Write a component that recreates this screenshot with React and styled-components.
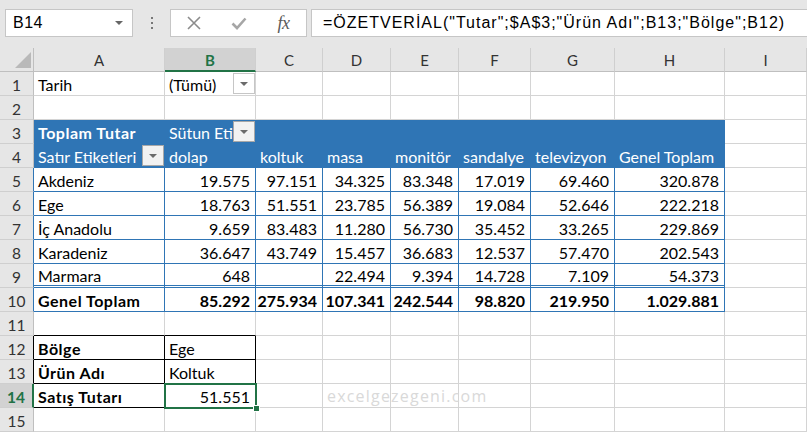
import React from 'react';
import styled, { createGlobalStyle } from 'styled-components';

const BLUE = '#2f75b5';
const GRID = '#d4d4d4';
const GREEN = '#217346';
const COLS = [34, 131, 91, 67, 68, 68, 72, 84, 110, 82];
const LETTERS = ['A', 'B', 'C', 'D', 'E', 'F', 'G', 'H', 'I'];

const GlobalStyle = createGlobalStyle`
  html, body { margin: 0; padding: 0; background: #fff; }
  body { font-family: Lato, "Liberation Sans", sans-serif; }
`;

const Page = styled.div`
  position: relative;
  width: 807px;
  height: 432px;
  overflow: hidden;
  background: #fff;
`;

const TopBar = styled.div`
  box-sizing: border-box;
  height: 48px;
  background: #e6e6e6;
  display: flex;
  align-items: flex-start;
  padding: 9px 0 0 5px;
`;

const NameBox = styled.div`
  box-sizing: border-box;
  width: 128px;
  height: 28px;
  background: #fff;
  border: 1px solid #c6c6c6;
  display: flex;
  align-items: center;
  justify-content: space-between;
  padding: 0 9px 0 7px;
  font-family: "Liberation Sans", Arial, sans-serif;
  font-size: 16px;
  letter-spacing: 0.5px;
  color: #000;
`;

const Caret = styled.span`
  width: 0;
  height: 0;
  border-left: 4px solid transparent;
  border-right: 4px solid transparent;
  border-top: 4px solid #666;
`;

const Dots = styled.div`
  width: 37px;
  height: 28px;
  display: flex;
  flex-direction: column;
  align-items: center;
  justify-content: center;
  gap: 3px;
  & > span {
    width: 2px;
    height: 2px;
    background: #777;
  }
`;

const FxBox = styled.div`
  box-sizing: border-box;
  width: 137px;
  height: 28px;
  background: #fff;
  border: 1px solid #c6c6c6;
  display: grid;
  grid-template-columns: 45px 45px 45px;
  align-items: center;
  justify-items: center;
`;

const FxText = styled.span`
  font-family: "Liberation Serif", "DejaVu Serif", serif;
  font-style: italic;
  font-size: 18px;
  color: #5a5a5a;
  letter-spacing: -0.5px;
`;

const Formula = styled.div`
  box-sizing: border-box;
  flex: 1;
  margin-left: 4px;
  margin-right: -2px;
  height: 28px;
  background: #fff;
  border: 1px solid #c6c6c6;
  display: flex;
  align-items: center;
  padding-left: 11px;
  font-family: "Liberation Sans", Arial, sans-serif;
  font-size: 16px;
  letter-spacing: 1px;
  color: #000;
  white-space: nowrap;
`;

const Sheet = styled.div`
  display: grid;
  grid-template-columns: ${COLS.map((w) => w + 'px').join(' ')};
  grid-auto-rows: 24px;
`;

const Corner = styled.div`
  box-sizing: border-box;
  background: #e6e6e6;
  border-right: 1px solid #bfbfbf;
  border-bottom: 1px solid #bfbfbf;
  display: flex;
  align-items: flex-end;
  justify-content: flex-end;
  padding: 0 2px 3px 0;
`;

const ColHead = styled.div`
  box-sizing: border-box;
  display: flex;
  align-items: center;
  justify-content: center;
  background: ${(p) => (p.$active ? '#d2d2d2' : '#e6e6e6')};
  color: ${(p) => (p.$active ? GREEN : '#333')};
  font-weight: ${(p) => (p.$active ? 700 : 400)};
  border-right: 1px solid #cfcfcf;
  border-bottom: ${(p) => (p.$active ? `2px solid ${GREEN}` : '1px solid #bfbfbf')};
  font-size: 15px;
  padding-top: 1px;
`;

const RowHead = styled.div`
  box-sizing: border-box;
  display: flex;
  align-items: center;
  justify-content: center;
  background: ${(p) => (p.$active ? '#d2d2d2' : '#e6e6e6')};
  color: ${(p) => (p.$active ? GREEN : '#333')};
  font-weight: ${(p) => (p.$active ? 700 : 400)};
  border-bottom: 1px solid #cfcfcf;
  border-right: ${(p) => (p.$active ? `2px solid ${GREEN}` : `1px solid ${p.$r || '#bfbfbf'}`)};
  font-size: 15.5px;
  padding-top: 2px;
`;

const Cell = styled.div`
  box-sizing: border-box;
  position: relative;
  z-index: ${(p) => (p.$sel ? 2 : 0)};
  display: flex;
  align-items: center;
  justify-content: ${(p) => (p.$align === 'right' ? 'flex-end' : 'flex-start')};
  padding: 2px ${(p) => (p.$btn ? '0' : '5px')} 0 4px;
  background: ${(p) => p.$bg || '#fff'};
  color: ${(p) => p.$color || '#000'};
  font-weight: ${(p) => (p.$bold ? 700 : 400)};
  letter-spacing: ${(p) => (p.$wide ? '0.5px' : 'normal')};
  border-right: 1px solid ${(p) => p.$r || GRID};
  border-bottom: ${(p) => p.$b || `1px solid ${GRID}`};
  font-size: 16px;
  white-space: nowrap;
  &::after {
    content: ${(p) => (p.$sel ? "''" : 'none')};
    position: absolute;
    left: -1px;
    top: -1px;
    right: -2px;
    bottom: -2px;
    border: 2px solid ${GREEN};
  }
  &::before {
    content: ${(p) => (p.$sel ? "''" : 'none')};
    position: absolute;
    right: -5px;
    bottom: -5px;
    width: 5px;
    height: 5px;
    background: ${GREEN};
    border: 1px solid #fff;
    z-index: 3;
  }
`;

const Txt = styled.span`
  overflow: hidden;
  flex: ${(p) => (p.$clip ? 1 : 'none')};
  min-width: 0;
`;

const DropBtn = styled.span`
  flex: none;
  align-self: flex-end;
  box-sizing: border-box;
  width: 22px;
  height: 21px;
  margin-bottom: 1px;
  background: ${(p) => (p.$plain ? '#fff' : '#f2f2f2')};
  border: 1px solid ${(p) => (p.$plain ? '#c6c6c6' : '#a8a8a8')};
  display: flex;
  align-items: center;
  justify-content: center;
  &::after {
    content: '';
    border-left: 4px solid transparent;
    border-right: 4px solid transparent;
    border-top: 4px solid #6b6b6b;
  }
`;

const Watermark = styled.div`
  position: absolute;
  left: 327px;
  top: 385px;
  font-family: "Open Sans", "DejaVu Sans", sans-serif;
  font-size: 16px;
  letter-spacing: 1.2px;
  color: #d9d9d9;
  pointer-events: none;
`;

const headers = ['dolap', 'koltuk', 'masa', 'monitör', 'sandalye', 'televizyon', 'Genel Toplam'];
const regions = [
  ['Akdeniz', ['19.575', '97.151', '34.325', '83.348', '17.019', '69.460', '320.878']],
  ['Ege', ['18.763', '51.551', '23.785', '56.389', '19.084', '52.646', '222.218']],
  ['İç Anadolu', ['9.659', '83.483', '11.280', '56.730', '35.452', '33.265', '229.869']],
  ['Karadeniz', ['36.647', '43.749', '15.457', '36.683', '12.537', '57.470', '202.543']],
  ['Marmara', ['648', '', '22.494', '9.394', '14.728', '7.109', '54.373']],
];
const totals = ['85.292', '275.934', '107.341', '242.544', '98.820', '219.950', '1.029.881'];

const Empty = ({ n, ...rest }) =>
  Array.from({ length: n }).map((_, i) => <Cell key={'e' + i} {...rest} />);

export default function App() {
  const blueFill = { $bg: BLUE, $color: '#fff', $r: BLUE, $b: `1px solid ${BLUE}` };
  const pv = { $r: BLUE, $b: `1px solid ${BLUE}` };
  const black = '#000';
  const boxed = { $r: black, $b: `1px solid ${black}` };

  return (
    <Page>
      <GlobalStyle />
      <TopBar>
        <NameBox>
          <span>B14</span>
          <Caret />
        </NameBox>
        <Dots>
          <span />
          <span />
          <span />
        </Dots>
        <FxBox>
          <svg width="14" height="14" viewBox="0 0 14 14">
            <path d="M1 1 L13 13 M13 1 L1 13" stroke="#8c8c8c" strokeWidth="1.6" fill="none" />
          </svg>
          <svg width="16" height="13" viewBox="0 0 16 13">
            <path d="M1.5 6.5 L6 11 L14.5 1.5" stroke="#a6a6a6" strokeWidth="2.6" fill="none" />
          </svg>
          <FxText>fx</FxText>
        </FxBox>
        <Formula>=ÖZETVERİAL("Tutar";$A$3;"Ürün Adı";B13;"Bölge";B12)</Formula>
      </TopBar>

      <Sheet>
        <Corner>
          <svg width="16" height="16" viewBox="0 0 16 16">
            <polygon points="16,0 16,16 0,16" fill="#b9b9b9" />
          </svg>
        </Corner>
        {LETTERS.map((l) => (
          <ColHead key={l} $active={l === 'B'}>
            {l}
          </ColHead>
        ))}

        {/* Row 1 */}
        <RowHead>1</RowHead>
        <Cell>Tarih</Cell>
        <Cell $btn>
          <Txt $clip>(Tümü)</Txt>
          <DropBtn $plain />
        </Cell>
        <Empty n={7} />

        {/* Row 2 */}
        <RowHead>2</RowHead>
        <Empty n={9} />

        {/* Row 3 */}
        <RowHead>3</RowHead>
        <Cell {...blueFill} $bold $wide>
          Toplam Tutar
        </Cell>
        <Cell {...blueFill} $btn>
          <Txt $clip>Sütun Etiketleri</Txt>
          <DropBtn />
        </Cell>
        <Empty n={6} {...blueFill} />
        <Cell />

        {/* Row 4 */}
        <RowHead>4</RowHead>
        <Cell {...blueFill} $btn>
          <Txt $clip>Satır Etiketleri</Txt>
          <DropBtn />
        </Cell>
        {headers.map((h) => (
          <Cell key={h} {...blueFill}>
            <Txt $clip>{h}</Txt>
          </Cell>
        ))}
        <Cell />

        {/* Rows 5-9 */}
        {regions.map(([name, vals], ri) => {
          const last = ri === regions.length - 1;
          const b = last ? `3px double ${BLUE}` : `1px solid ${BLUE}`;
          return (
            <React.Fragment key={name}>
              <RowHead $r={BLUE}>{5 + ri}</RowHead>
              <Cell $r={BLUE} $b={b}>
                {name}
              </Cell>
              {vals.map((v, i) => (
                <Cell key={i} $r={BLUE} $b={b} $align="right">
                  {v}
                </Cell>
              ))}
              <Cell />
            </React.Fragment>
          );
        })}

        {/* Row 10 */}
        <RowHead $r={BLUE}>10</RowHead>
        <Cell {...pv} $bold $wide>
          Genel Toplam
        </Cell>
        {totals.map((v, i) => (
          <Cell key={i} {...pv} $bold $align="right">
            {v}
          </Cell>
        ))}
        <Cell />

        {/* Row 11 */}
        <RowHead>11</RowHead>
        <Cell $b={`1px solid ${black}`} />
        <Cell $b={`1px solid ${black}`} />
        <Empty n={7} />

        {/* Row 12 */}
        <RowHead $r={black}>12</RowHead>
        <Cell {...boxed} $bold $wide>
          Bölge
        </Cell>
        <Cell {...boxed}>Ege</Cell>
        <Empty n={7} />

        {/* Row 13 */}
        <RowHead $r={black}>13</RowHead>
        <Cell {...boxed} $bold $wide>
          Ürün Adı
        </Cell>
        <Cell {...boxed}>Koltuk</Cell>
        <Empty n={7} />

        {/* Row 14 */}
        <RowHead $active>14</RowHead>
        <Cell {...boxed} $bold $wide>
          Satış Tutarı
        </Cell>
        <Cell {...boxed} $align="right" $sel>
          51.551
        </Cell>
        <Empty n={7} />

        {/* Row 15 */}
        <RowHead>15</RowHead>
        <Empty n={9} />
      </Sheet>

      <Watermark>excelgezegeni.com</Watermark>
    </Page>
  );
}
